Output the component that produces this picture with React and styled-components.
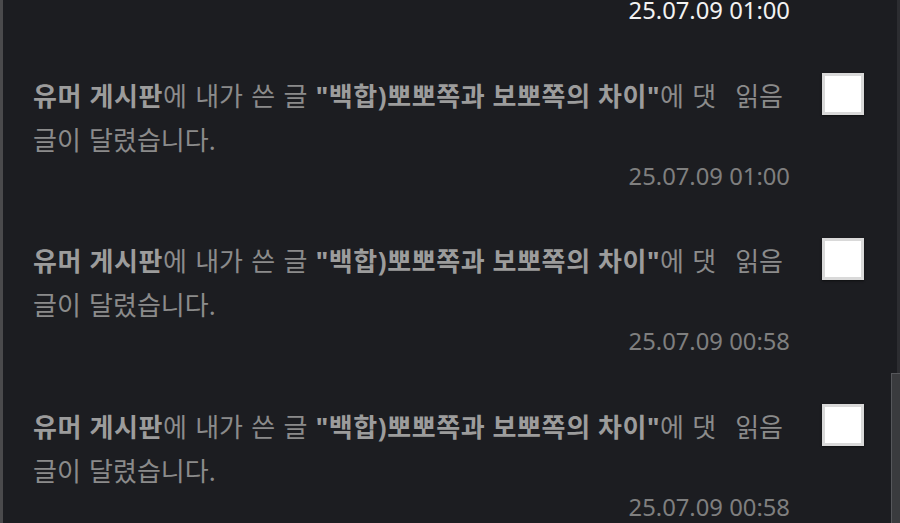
import { useLayoutEffect, useRef, useState } from 'react';
import styled, { createGlobalStyle } from 'styled-components';

const GlobalStyle = createGlobalStyle`
  html, body {
    margin: 0;
    padding: 0;
    background: #1c1d21;
  }
  body {
    font-family: "Noto Sans", "Noto Sans CJK KR", sans-serif;
  }
`;

const Frame = styled.div`
  display: flex;
  height: 100vh;
  box-sizing: border-box;
  background: #1c1d21;
  border-left: 3px solid #4a4a4c;
`;

const Panel = styled.div`
  flex: 1;
  min-width: 0;
  overflow: hidden;
`;

const Track = styled.div`
  flex: none;
  width: 9px;
  display: flex;
  flex-direction: column;
  justify-content: flex-end;
  box-shadow: inset -3px 0 0 #2c2d31;
`;

const Thumb = styled.div`
  box-sizing: border-box;
  background: #3a3b3e;
  border-left: 1px solid #56575b;
  border-top: 1px solid #56575b;
`;

const List = styled.ul`
  list-style: none;
  margin: 0;
  padding: 0 27px 0 30px;
`;

const Item = styled.li`
  display: flex;
  align-items: flex-start;
  padding-top: 48.5px;
`;

const Content = styled.div`
  flex: 1;
  min-width: 0;
`;

const TopRow = styled.div`
  display: flex;
  align-items: flex-start;
`;

const Message = styled.p`
  flex: 1;
  margin: 0;
  font-size: 26px;
  line-height: 44px;
  word-spacing: 1.5px;
  color: #8b8b8b;
`;

const Strong = styled.b`
  font-weight: 700;
  color: #9c9c9c;
  letter-spacing: 0.6px;
  word-spacing: normal;
`;

const Status = styled.span`
  font-size: 26px;
  line-height: 44px;
  color: #8b8b8b;
  padding: 0 7px 0 10px;
`;

const Date = styled.div`
  text-align: right;
  font-size: 23.8px;
  line-height: 29px;
  color: ${(p) => (p.$fresh ? '#f2f2f2' : '#7f7f7f')};
`;

const Check = styled.span`
  flex: none;
  width: 42px;
  height: 42px;
  box-sizing: border-box;
  margin: -1px 0 0 32px;
  background: #ffffff;
  border: 3px solid #d9d9d9;
  box-shadow: 0 1px 2px rgba(0, 0, 0, 0.5);
`;

const items = [
  { date: '25.07.09 01:12', fresh: true },
  { date: '25.07.09 01:10', fresh: true },
  { date: '25.07.09 01:09', fresh: true },
  { date: '25.07.09 01:08', fresh: true },
  { date: '25.07.09 01:06', fresh: true },
  { date: '25.07.09 01:04', fresh: true },
  { date: '25.07.09 01:03', fresh: true },
  { date: '25.07.09 01:00', fresh: true },
  { date: '25.07.09 01:00' },
  { date: '25.07.09 00:58' },
  { date: '25.07.09 00:58' },
];

export default function App() {
  const panel = useRef(null);
  const [thumb, setThumb] = useState(0);

  useLayoutEffect(() => {
    const el = panel.current;
    if (!el) return;
    el.scrollTop = el.scrollHeight;
    setThumb((el.clientHeight * el.clientHeight) / el.scrollHeight);
  }, []);

  return (
    <>
      <GlobalStyle />
      <Frame>
        <Panel ref={panel}>
          <List>
            {items.map((item, i) => (
              <Item key={i}>
                <Content>
                  <TopRow>
                    <Message>
                      <Strong>유머 게시판</Strong>에 내가 쓴 글{' '}
                      <Strong>"백합)뽀뽀쪽과 보뽀쪽의 차이"</Strong>에 댓글이
                      달렸습니다.
                    </Message>
                    <Status>읽음</Status>
                  </TopRow>
                  <Date $fresh={item.fresh}>{item.date}</Date>
                </Content>
                <Check role="checkbox" aria-checked="false" />
              </Item>
            ))}
          </List>
        </Panel>
        <Track>
          <Thumb style={{ height: thumb }} />
        </Track>
      </Frame>
    </>
  );
}
